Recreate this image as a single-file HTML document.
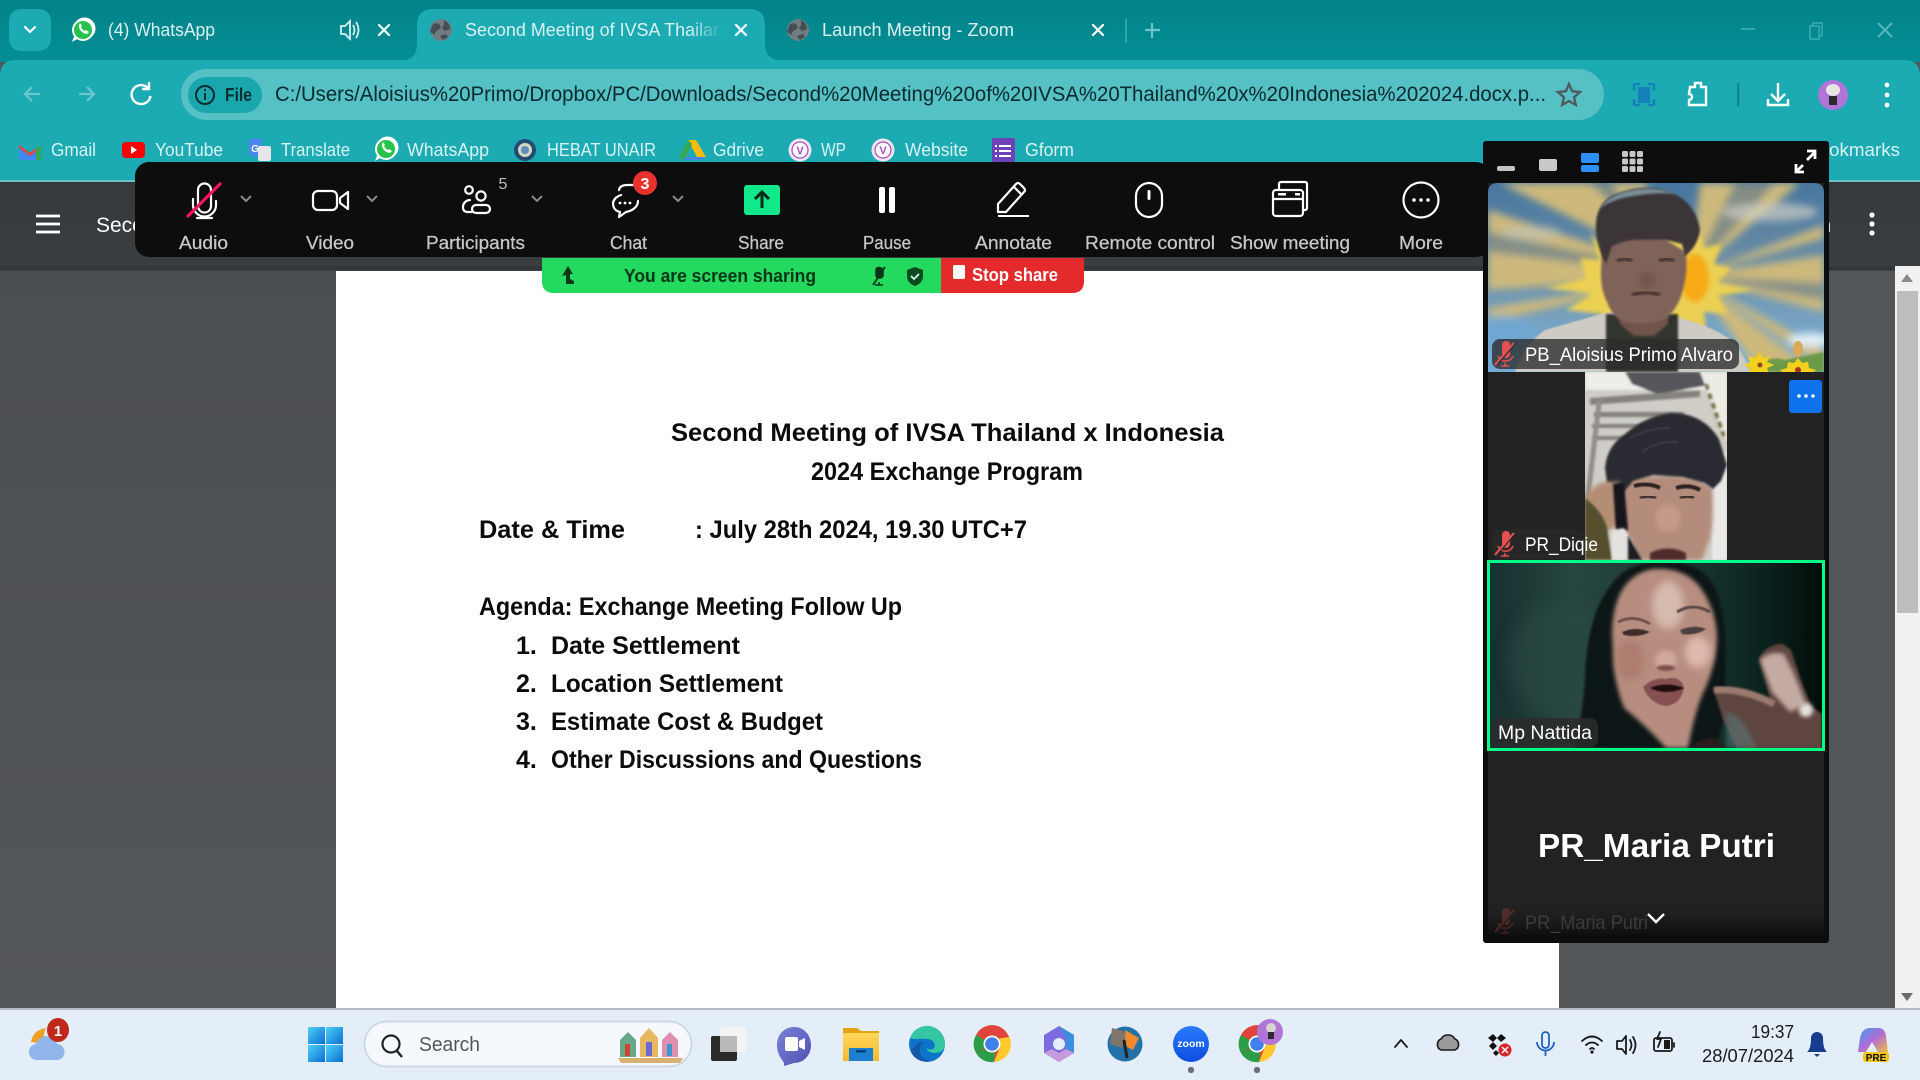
<!DOCTYPE html>
<html lang="en"><head><meta charset="utf-8"><title>Second Meeting</title>
<style>
html,body{margin:0;padding:0;width:1920px;height:1080px;overflow:hidden;background:#525659}
svg{display:block}
text{font-family:"Liberation Sans",sans-serif;white-space:pre}
.tab{font-size:18px;fill:#d8f1f2}
.bm{font-size:18px;fill:#d9f2f3}
.zl{font-size:18px;fill:#c8c8c8;text-anchor:start;font-weight:400;stroke:#c8c8c8;stroke-width:.25}
.doc{font-weight:700;fill:#0b0b0b;font-size:25px}
.lab{font-size:19px;fill:#fff}
.ic{fill:none;stroke:#fff;stroke-width:2.2;stroke-linecap:round;stroke-linejoin:round}
.tr{fill:none;stroke:#1a1a1a;stroke-width:1.8;stroke-linecap:round;stroke-linejoin:round}
</style></head><body>
<svg width="1920" height="1080" viewBox="0 0 1920 1080" xmlns="http://www.w3.org/2000/svg">
<defs>
<linearGradient id="tabs" x1="0" y1="0" x2="0" y2="1"><stop offset="0" stop-color="#028289"/><stop offset="1" stop-color="#048f95"/></linearGradient>
<linearGradient id="head" x1="0" y1="0" x2="0" y2="1"><stop offset="0" stop-color="#36393c"/><stop offset="1" stop-color="#3b3e41"/></linearGradient>
<linearGradient id="side" x1="0" y1="0" x2="0" y2="1"><stop offset="0" stop-color="#4c4f52"/><stop offset="1" stop-color="#54575a"/></linearGradient>
<linearGradient id="fade" x1="0" y1="0" x2="1" y2="0"><stop offset="0" stop-color="#1cabb2" stop-opacity="0"/><stop offset="1" stop-color="#1cabb2"/></linearGradient>
<linearGradient id="pf" x1="0" y1="0" x2="0" y2="1"><stop offset="0" stop-color="#222" stop-opacity="0"/><stop offset="1" stop-color="#0e0e0e"/></linearGradient>
<linearGradient id="v3" x1="0" y1="0" x2="1" y2="0"><stop offset="0" stop-color="#16302f"/><stop offset=".25" stop-color="#27463f"/><stop offset=".55" stop-color="#1b3a35"/><stop offset=".8" stop-color="#0c2521"/><stop offset="1" stop-color="#020d0a"/></linearGradient>
<linearGradient id="skyg" x1="0" y1="0" x2="0" y2="1"><stop offset="0" stop-color="#47759f"/><stop offset=".45" stop-color="#6d8fa6"/><stop offset="1" stop-color="#7fb4da"/></linearGradient>
<linearGradient id="win1" x1="0" y1="0" x2="1" y2="1"><stop offset="0" stop-color="#4fd0f8"/><stop offset="1" stop-color="#0a6fd0"/></linearGradient>
<linearGradient id="zm" x1="0" y1="0" x2="0" y2="1"><stop offset="0" stop-color="#2a7bff"/><stop offset="1" stop-color="#0b4de0"/></linearGradient>
<linearGradient id="folder" x1="0" y1="0" x2="0" y2="1"><stop offset="0" stop-color="#ffd75c"/><stop offset="1" stop-color="#f6b92c"/></linearGradient>
<linearGradient id="meet" x1="0" y1="0" x2="1" y2="1"><stop offset="0" stop-color="#7b83d8"/><stop offset="1" stop-color="#4f4fb0"/></linearGradient>
<linearGradient id="cp" x1="0" y1="0" x2="1" y2="1"><stop offset="0" stop-color="#3aa4ee"/><stop offset=".5" stop-color="#b06ad8"/><stop offset="1" stop-color="#f0c040"/></linearGradient>
<filter id="b05" x="-30%" y="-30%" width="160%" height="160%"><feGaussianBlur stdDeviation=".6"/></filter>
<filter id="b1" x="-30%" y="-30%" width="160%" height="160%"><feGaussianBlur stdDeviation="1"/></filter>
<filter id="b2" x="-30%" y="-30%" width="160%" height="160%"><feGaussianBlur stdDeviation="2"/></filter>
<filter id="b4" x="-50%" y="-50%" width="200%" height="200%"><feGaussianBlur stdDeviation="4"/></filter>
<filter id="b8" x="-80%" y="-80%" width="260%" height="260%"><feGaussianBlur stdDeviation="8"/></filter>
<clipPath id="c1"><path d="M1488 372V193q0-10 10-10h316q10 0 10 10v179z"/></clipPath>
<clipPath id="c2"><rect x="1585" y="372" width="142" height="188"/></clipPath>
<clipPath id="c3"><rect x="1490" y="563" width="332" height="185"/></clipPath>
<clipPath id="tc2"><rect x="417" y="0" width="305" height="60"/></clipPath>
<g id="wa"><circle cx="0" cy="0" r="11" fill="#fff"/><path d="M-11 12l3-8a11 11 0 1 1 4 4z" fill="#fff"/><circle cx="0" cy="0" r="9" fill="#27c24c"/><path d="M-4-5c-1 4 4 9 8 9l2-2-3-2-1 1c-2-1-3-2-4-4l1-1-2-3z" fill="#fff"/></g>
<g id="globe"><circle r="11" fill="#6f7d82"/><path d="M-8-6q5-2 7 1t-2 5-3 5l-5-3zM3-10q6 3 6 9l-5 2-3-3 2-3zM-1 6l6-2 2 3-5 3z" fill="#444e53"/></g>
<g id="vt"><circle r="11.5" fill="#f1e4f1"/><circle r="8" fill="#fff" stroke="#a24fc0" stroke-width="1.2"/><text x="0" y="4" font-size="11" fill="#a24fc0" text-anchor="middle" font-weight="700">V</text></g>
<g id="mm"><path d="M-3-9a4 4 0 0 1 8 0v9a4 4 0 0 1-8 0z" fill="#e45050"/><path d="M-7 2a8 8 0 0 0 15 0M0 9v3M-4 12h8" fill="none" stroke="#e45050" stroke-width="1.6"/><path d="M-10 11L9-11" stroke="#e45050" stroke-width="2.2"/><path d="M-8 11L11-11" stroke="#2b2b2b" stroke-width="1.2"/></g>
<g id="chrome"><circle r="18" fill="#e8443a"/><path d="M0 0L-16 9A18 18 0 0 1-16-9z" fill="#2a9d46"/><path d="M-16 9A18 18 0 0 0 2 18L4 0z" fill="#2a9d46"/><path d="M3-8H17A18 18 0 0 1 2 18L8 3z" fill="#fdc92f"/><path d="M-16-9A18 18 0 0 1 17-7L4-5z" fill="#e0443a"/><circle r="8.5" fill="#fff"/><circle r="6.8" fill="#3f80ea"/></g>
</defs>

<!-- page background -->
<rect width="1920" height="1080" fill="#525659"/>
<rect x="0" y="270" width="336" height="738" fill="url(#side)"/>
<rect x="0" y="0" width="1920" height="62" fill="url(#tabs)"/>
<path d="M0 182V76q0-16 16-16h1888q16 0 16 16v106z" fill="#1cabb2"/>

<!-- active tab -->
<path d="M405 60q12-2 12-16V25q0-16 16-16h316q16 0 16 16v19q0 14 13 16z" fill="#1cabb2"/>
<rect x="9" y="9" width="42" height="42" rx="12" fill="#1cabb2"/>
<path d="M25 27l5 5 5-5" class="ic" stroke-width="2.6"/>
<use href="#wa" x="83" y="30"/>
<text class="tab" x="108" y="36" textLength="107" lengthAdjust="spacingAndGlyphs">(4) WhatsApp</text>
<path d="M341 26h4l5-5v18l-5-5h-4zM353 25q3 5 0 10M356 22q5 8 0 16" fill="none" stroke="#d8f1f2" stroke-width="1.8"/>
<path d="M379 25l10 10M389 25l-10 10" class="ic" stroke-width="2.6"/>
<use href="#globe" x="441" y="30"/>
<g clip-path="url(#tc2)"><text class="tab" x="465" y="36" textLength="268" lengthAdjust="spacingAndGlyphs">Second Meeting of IVSA Thailand</text></g>
<rect x="690" y="15" width="32" height="30" fill="url(#fade)"/>
<path d="M736 25l10 10M746 25l-10 10" class="ic" stroke-width="2.6"/>
<use href="#globe" x="798" y="30"/>
<text class="tab" x="822" y="36" textLength="192" lengthAdjust="spacingAndGlyphs">Launch Meeting - Zoom</text>
<path d="M1093 25l10 10M1103 25l-10 10" class="ic" stroke-width="2.6"/>
<rect x="1125" y="19" width="2" height="24" fill="#2ba8ae"/>
<path d="M1152 23v15M1145 30h15" fill="none" stroke="#6bc5c9" stroke-width="2.2"/>
<path d="M1741 29h14" stroke="#33a7ac" stroke-width="2"/>
<path d="M1810 26h9v13h-9zM1813 26v-3h9v13h-3" fill="none" stroke="#33a7ac" stroke-width="1.8"/>
<path d="M1878 23l14 14M1892 23l-14 14" stroke="#54b5ba" stroke-width="2"/>

<!-- toolbar -->
<path d="M40 94H26M32 87l-7 7 7 7" fill="none" stroke="#6cc6cb" stroke-width="2.2"/>
<path d="M79 94h14M87 87l7 7-7 7" fill="none" stroke="#6cc6cb" stroke-width="2.2"/>
<path d="M148 88a9.5 9.5 0 1 0 2.5 8M149 82v7h-7" fill="none" stroke="#fff" stroke-width="2.4"/>
<rect x="181" y="69" width="1423" height="51" rx="25.5" fill="#55c1c5"/>
<rect x="188" y="77" width="74" height="36" rx="18" fill="#1aa6ad"/>
<circle cx="205" cy="95" r="9" fill="none" stroke="#0b2b2e" stroke-width="2"/>
<path d="M205 93v7M205 89v2" stroke="#0b2b2e" stroke-width="2"/>
<text x="225" y="101" font-size="18" font-weight="700" fill="#0d2e30" textLength="27" lengthAdjust="spacingAndGlyphs">File</text>
<text x="275" y="101" font-size="21" fill="#0c2a2d" textLength="1271" lengthAdjust="spacingAndGlyphs">C:/Users/Aloisius%20Primo/Dropbox/PC/Downloads/Second%20Meeting%20of%20IVSA%20Thailand%20x%20Indonesia%202024.docx.p...</text>
<path d="M1569 84l3.2 7.2 7.8.8-5.9 5.2 1.7 7.8-6.8-4-6.8 4 1.7-7.8-5.9-5.2 7.8-.8z" fill="none" stroke="#4f5b5e" stroke-width="2.4"/>
<path d="M1634 90v-6h6M1648 84h6v6M1654 99v6h-6M1640 105h-6v-6" fill="none" stroke="#1481ba" stroke-width="2.2"/>
<rect x="1638" y="87" width="12" height="16" fill="#1481ba"/>
<path d="M1690 87h5v-4h6v4h5v18h-17v-5a3 3 0 0 0 0-6z" fill="none" stroke="#fff" stroke-width="2.4"/>
<rect x="1737" y="83" width="2.4" height="23" fill="#12838a"/>
<path d="M1778 83v18M1771 94l7 7 7-7M1768 99v6h20v-6" fill="none" stroke="#fff" stroke-width="2.4"/>
<ellipse cx="1833" cy="95" rx="15" ry="15" fill="#b174d8"/>
<ellipse cx="1833" cy="90" rx="7" ry="6" fill="#e8e4e0"/><rect x="1829" y="96" width="8" height="9" fill="#2a2a2a"/>
<g fill="#fff"><circle cx="1887" cy="85" r="2.4"/><circle cx="1887" cy="95" r="2.4"/><circle cx="1887" cy="105" r="2.4"/></g>

<!-- bookmarks -->
<path d="M19 160v-15l11 8 11-8v15" fill="#4285f4"/><path d="M19 145l11 8 11-8v3l-11 8-11-8z" fill="#ea4335"/><path d="M36 149l5-4v15h-5z" fill="#34a853"/>
<text class="bm" x="51" y="156" textLength="45" lengthAdjust="spacingAndGlyphs">Gmail</text>
<rect x="122" y="142" width="23" height="16" rx="4" fill="#f00"/><path d="M131 146l6 4-6 4z" fill="#fff"/>
<text class="bm" x="155" y="156" textLength="68" lengthAdjust="spacingAndGlyphs">YouTube</text>
<rect x="249" y="139" width="13" height="17" rx="2" fill="#4a87ee"/><rect x="258" y="146" width="13" height="15" rx="2" fill="#e4e6ea"/>
<text x="255" y="152" font-size="10" fill="#fff" text-anchor="middle" font-weight="700">G</text>
<text class="bm" x="281" y="156" textLength="69" lengthAdjust="spacingAndGlyphs">Translate</text>
<use href="#wa" x="386" y="149"/>
<text class="bm" x="407" y="156" textLength="82" lengthAdjust="spacingAndGlyphs">WhatsApp</text>
<circle cx="525" cy="150" r="11" fill="#234a72"/><circle cx="525" cy="150" r="7" fill="#cfd8c0"/><circle cx="525" cy="150" r="4" fill="#5e8bb8"/>
<text class="bm" x="547" y="156" textLength="109" lengthAdjust="spacingAndGlyphs">HEBAT UNAIR</text>
<path d="M688 140h8l10 17h-9z" fill="#fbbc04"/><path d="M688 140l-9 17 5 3 8-16z" fill="#34a853"/><path d="M684 160h17l5-3h-20z" fill="#4285f4"/>
<text class="bm" x="713" y="156" textLength="51" lengthAdjust="spacingAndGlyphs">Gdrive</text>
<use href="#vt" x="800" y="150"/>
<text class="bm" x="821" y="156" textLength="25" lengthAdjust="spacingAndGlyphs">WP</text>
<use href="#vt" x="883" y="150"/>
<text class="bm" x="905" y="156" textLength="63" lengthAdjust="spacingAndGlyphs">Website</text>
<rect x="992" y="138" width="23" height="24" rx="2" fill="#6f41b8"/><path d="M999 146h12M999 151h12M999 156h12" stroke="#fff" stroke-width="2"/><path d="M995 146h2M995 151h2M995 156h2" stroke="#fff" stroke-width="2"/>
<text class="bm" x="1025" y="156" textLength="49" lengthAdjust="spacingAndGlyphs">Gform</text>
<text class="bm" x="1829" y="156" textLength="71" lengthAdjust="spacingAndGlyphs">okmarks</text>

<!-- dark pdf header -->
<rect x="0" y="180" width="1920" height="2.5" fill="#68c3c7"/>
<rect x="0" y="182" width="1920" height="88" fill="url(#head)"/>
<rect x="0" y="266" width="1920" height="5" fill="#2d3032" opacity=".5"/>
<path d="M36 216h24M36 224h24M36 232h24" stroke="#fff" stroke-width="2.8"/>
<text x="96" y="232" font-size="21" fill="#fff">Second</text>
<text x="1820" y="232" font-size="20" fill="#fff">n</text>
<g fill="#fff"><circle cx="1872" cy="215" r="2.6"/><circle cx="1872" cy="224" r="2.6"/><circle cx="1872" cy="233" r="2.6"/></g>

<!-- scrollbar -->
<rect x="1895" y="266" width="25" height="742" fill="#f1f1f1"/>
<path d="M1907 274l6 8h-12z" fill="#8a8a8a"/>
<rect x="1897" y="291" width="21" height="322" fill="#bdbdbd"/>
<path d="M1907 1001l6-8h-12z" fill="#6a6a6a"/>

<!-- page -->
<rect x="336" y="271" width="1223" height="737" fill="#fff"/>
<text class="doc" x="671" y="441" textLength="553" lengthAdjust="spacingAndGlyphs">Second Meeting of IVSA Thailand x Indonesia</text>
<text class="doc" x="811" y="480" textLength="272" lengthAdjust="spacingAndGlyphs">2024 Exchange Program</text>
<text class="doc" x="479" y="538" textLength="146" lengthAdjust="spacingAndGlyphs">Date &amp; Time</text>
<text class="doc" x="695" y="538" textLength="332" lengthAdjust="spacingAndGlyphs">: July 28th 2024, 19.30 UTC+7</text>
<text class="doc" x="479" y="615" textLength="423" lengthAdjust="spacingAndGlyphs">Agenda: Exchange Meeting Follow Up</text>
<text class="doc" x="516" y="654">1.</text><text class="doc" x="551" y="654" textLength="189" lengthAdjust="spacingAndGlyphs">Date Settlement</text>
<text class="doc" x="516" y="692">2.</text><text class="doc" x="551" y="692" textLength="232" lengthAdjust="spacingAndGlyphs">Location Settlement</text>
<text class="doc" x="516" y="730">3.</text><text class="doc" x="551" y="730" textLength="272" lengthAdjust="spacingAndGlyphs">Estimate Cost &amp; Budget</text>
<text class="doc" x="516" y="768">4.</text><text class="doc" x="551" y="768" textLength="371" lengthAdjust="spacingAndGlyphs">Other Discussions and Questions</text>

<!-- zoom toolbar -->
<rect x="135" y="162" width="1355" height="95" rx="14" fill="#0d0d0d"/>
<text class="zl" x="179" y="249" textLength="49" lengthAdjust="spacingAndGlyphs">Audio</text>
<text class="zl" x="306" y="249" textLength="48" lengthAdjust="spacingAndGlyphs">Video</text>
<text class="zl" x="426" y="249" textLength="99" lengthAdjust="spacingAndGlyphs">Participants</text>
<text class="zl" x="610" y="249" textLength="37" lengthAdjust="spacingAndGlyphs">Chat</text>
<text class="zl" x="738" y="249" textLength="46" lengthAdjust="spacingAndGlyphs">Share</text>
<text class="zl" x="863" y="249" textLength="48" lengthAdjust="spacingAndGlyphs">Pause</text>
<text class="zl" x="975" y="249" textLength="77" lengthAdjust="spacingAndGlyphs">Annotate</text>
<text class="zl" x="1085" y="249" textLength="130" lengthAdjust="spacingAndGlyphs">Remote control</text>
<text class="zl" x="1230" y="249" textLength="120" lengthAdjust="spacingAndGlyphs">Show meeting</text>
<text class="zl" x="1399" y="249" textLength="44" lengthAdjust="spacingAndGlyphs">More</text>
<!-- audio -->
<path d="M198 190a6.500 6.500 0 0 1 13 0v16a6.500 6.500 0 0 1-13 0zM193 199v6a11.500 11.500 0 0 0 23 0v-4M204.500 217v1M197 218h15" class="ic" stroke-width="1.8"/>
<path d="M188 216l32-32" stroke="#f5155f" stroke-width="3.2" stroke-linecap="round"/>
<!-- video -->
<rect x="313" y="191" width="24" height="19" rx="5" class="ic" stroke-width="1.8"/><path d="M340 198l8-6v17l-8-6z" class="ic" stroke-width="1.8"/>
<!-- participants -->
<circle cx="469" cy="190" r="3.800" class="ic" stroke-width="1.800"/><circle cx="481" cy="196" r="4.600" class="ic" stroke-width="1.800"/>
<path d="M472 212h-5a4 4 0 0 1-4-4v-1a7 7 0 0 1 7-7" class="ic" stroke-width="1.800"/><rect x="472" y="205" width="18" height="8" rx="4" class="ic" stroke-width="1.800"/>
<text x="503" y="189" font-size="16" fill="#c0c0c0" text-anchor="middle">5</text>
<!-- chat -->
<path d="M619 190q1-5 8-5h8M621 195a12 10 0 0 0-8 8c0 4 2 8 7 9l-1 5 7-5c6-1 12-5 12-11" class="ic" stroke-width="1.800"/>
<g fill="#fff"><circle cx="620" cy="203" r="1.400"/><circle cx="625" cy="203" r="1.400"/><circle cx="630" cy="203" r="1.400"/></g>
<circle cx="645" cy="183" r="12" fill="#e8302c"/><text x="645" y="189" font-size="16" fill="#fff" text-anchor="middle" font-weight="700">3</text>
<!-- chevrons -->
<path d="M241 196l5 5 5-5M367 196l5 5 5-5M532 196l5 5 5-5M673 196l5 5 5-5" fill="none" stroke="#8a8a8a" stroke-width="2"/>
<!-- share -->
<rect x="744" y="185" width="36" height="30" rx="3" fill="#10e88a"/>
<path d="M762 208v-15M755 199l7-7 7 7" fill="none" stroke="#0a2a1a" stroke-width="3"/>
<!-- pause -->
<rect x="879" y="187" width="6" height="26" rx="2" fill="#fff"/><rect x="889" y="187" width="6" height="26" rx="2" fill="#fff"/>
<!-- annotate -->
<path d="M998 204l18-20q2-2 4 0l4 4q2 2 0 4l-18 20h-8zM1014 187l7 7" class="ic" stroke-width="1.800"/><path d="M998 216h31" stroke="#fff" stroke-width="2"/>
<!-- remote -->
<rect x="1136" y="183" width="26" height="34" rx="13" class="ic" stroke-width="1.800"/><rect x="1147.500" y="190" width="3" height="10" rx="1.500" fill="#fff"/>
<!-- show meeting -->
<rect x="1273" y="190" width="30" height="26" rx="3" class="ic" stroke-width="1.800"/><path d="M1279 190v-6a2 2 0 0 1 2-2h24a2 2 0 0 1 2 2v24a2 2 0 0 1-2 2h-2M1274 199h28" class="ic" stroke-width="1.800"/>
<rect x="1278" y="193" width="8" height="2.500" fill="#fff"/><rect x="1295" y="193" width="5" height="2.500" fill="#fff"/>
<!-- more -->
<circle cx="1421" cy="200" r="17.500" class="ic" stroke-width="1.800"/><g fill="#fff"><circle cx="1414" cy="200" r="1.800"/><circle cx="1421" cy="200" r="1.800"/><circle cx="1428" cy="200" r="1.800"/></g>

<!-- sharing bar -->
<path d="M542 258h399v35H554q-12 0-12-12z" fill="#23d95e"/>
<path d="M941 258h143v23q0 12-12 12H941z" fill="#e42a2a"/>
<path d="M566 284v-9l-4 1 6-10 5 8h-3l0 5 4 2v3z" fill="#0a3a1a"/>
<text x="624" y="282" font-size="18" font-weight="700" fill="#0b3518" textLength="192" lengthAdjust="spacingAndGlyphs">You are screen sharing</text>
<path d="M876 269a4 4 0 0 1 7 2v5a4 4 0 0 1-7 0zM879 282v3M875 285h8" fill="#0b3518" stroke="#0b3518" stroke-width="1.500"/><path d="M873 285l12-18" stroke="#0b3518" stroke-width="1.800"/>
<path d="M915 267l8 3v6q0 7-8 10-8-3-8-10v-6z" fill="#0d4a20"/><path d="M911 276l3 3 5-5" fill="none" stroke="#cfe" stroke-width="1.800"/>
<rect x="953" y="265" width="12" height="14" rx="1.500" fill="#fff"/>
<text x="972" y="281" font-size="18" font-weight="700" fill="#fff" textLength="86" lengthAdjust="spacingAndGlyphs">Stop share</text>

<!-- participants panel -->
<rect x="1483" y="141" width="346" height="802" rx="3" fill="#0d0d0d"/>
<rect x="1488" y="183" width="336" height="752" fill="#222"/>
<rect x="1497" y="166" width="18" height="5" rx="2" fill="#c4c4c4"/>
<rect x="1539" y="159" width="18" height="12" rx="2" fill="#c9c9c9"/>
<rect x="1581" y="153" width="18" height="10" rx="2" fill="#2f8ffa"/><rect x="1581" y="165" width="18" height="7" rx="2" fill="#2f8ffa"/>
<g fill="#c8c8c8"><rect x="1622" y="151" width="6" height="6" rx="1.500"/><rect x="1629.500" y="151" width="6" height="6" rx="1.500"/><rect x="1637" y="151" width="6" height="6" rx="1.500"/><rect x="1622" y="158.500" width="6" height="6" rx="1.500"/><rect x="1629.500" y="158.500" width="6" height="6" rx="1.500"/><rect x="1637" y="158.500" width="6" height="6" rx="1.500"/><rect x="1622" y="166" width="6" height="6" rx="1.500"/><rect x="1629.500" y="166" width="6" height="6" rx="1.500"/><rect x="1637" y="166" width="6" height="6" rx="1.500"/></g>
<path d="M1796 172l7-7M1796 164v8h8M1815 152l-8 8M1807 151h8v8" fill="none" stroke="#fff" stroke-width="2.800"/>

<!-- video 1 -->
<g clip-path="url(#c1)">
<rect x="1488" y="183" width="336" height="189" fill="url(#skyg)"/>
<g filter="url(#b4)">
<path d="M1690 276L1488 252V290zM1690 276L1488 210V232zM1690 276L1500 183H1590zM1690 276L1610 183H1645zM1690 276L1700 183H1735zM1690 276L1824 255V283zM1690 276L1775 183H1800zM1690 276L1824 225V238zM1690 276L1824 300V312zM1690 276L1824 350V368zM1690 276L1760 372H1815zM1690 276L1488 308V322z" fill="#cdb97c"/>
<path d="M1690 276L1488 232V252zM1690 276L1590 183H1610zM1690 276L1735 183H1775zM1690 276L1824 283V300z" fill="#8b9181" opacity=".85"/>
<ellipse cx="1770" cy="212" rx="48" ry="9" fill="#cfcfc2" opacity=".7"/>
<ellipse cx="1530" cy="233" rx="30" ry="7" fill="#c0c2b0" opacity=".7"/>
<ellipse cx="1810" cy="340" rx="22" ry="7" fill="#dfeef5"/>
<ellipse cx="1500" cy="345" rx="40" ry="30" fill="#6ea8d4" opacity=".8"/>
</g>
<path d="M1590 232l12 14 82-6 14-14 6 22 18-4-8 20 18 4-14 14 36 8-36 6 10 18-24-2 2 20-18-10-4 12-70 0-20 2 8-22-36-4 26-16-46-6 40-10-6-20 20 2z" fill="#ecd052" filter="url(#b2)"/>
<ellipse cx="1695" cy="278" rx="14" ry="24" fill="#f6ab14" filter="url(#b2)"/>
<path d="M1515 372q8-26 30-42l56-16 10-2 70 6 18 6q24 8 36 20 10 12 15 28z" fill="#cdcbc3" filter="url(#b05)"/>
<path d="M1606 372v-58h72v58z" fill="#33362f" filter="url(#b1)"/>
<path d="M1620 300h48v24l-14 12h-20l-14-12z" fill="#6f524a" filter="url(#b1)"/>
<path d="M1601 268q-1 20 6 34 6 16 18 20 20 4 38-2 14-8 20-30 5-18 3-38l-30-18h-36l-18 16z" fill="#806359" filter="url(#b1)"/>
<path d="M1596 232q-2-26 16-36 30-14 58-4 26 10 30 38-2 16-15 26l-3-12q-18-6-34-4-20-2-36 6l-6 18q-8-14-10-32z" fill="#3a3638" filter="url(#b1)"/>
<path d="M1600 208q10-14 32-18 24-4 44 4-22-2-42 2-18 2-34 12z" fill="#7f979f" filter="url(#b1)" opacity=".9"/>
<path d="M1617 261q8-4 15 0M1659 261q8-4 15 0" stroke="#413230" stroke-width="3.500" fill="none" filter="url(#b1)"/>
<path d="M1632 295q14-5 28 0" stroke="#47302e" stroke-width="3.500" fill="none" filter="url(#b1)"/>
<ellipse cx="1647" cy="280" rx="9" ry="8" fill="#75564c" filter="url(#b2)"/>
<path d="M1752 372l10-10q14-6 22-2l40-8v20z" fill="#6d9a48" filter="url(#b1)"/>
<path d="M1760 352l3 6 7-2-3 6 7 3-7 3 2 6-7-2-4 6-3-6-7 2 2-6-6-3 6-3-2-6 7 2z" fill="#f4d01e"/><path d="M1798 358l4 5 6-1 1 6 7 2-5 4v6h-26v-6l-5-4 7-2 1-6 6 1z" fill="#f4d01e"/><circle cx="1798" cy="370" r="3" fill="#a8321e"/><circle cx="1760" cy="365" r="2.500" fill="#8a4a1e"/>
<ellipse cx="1798" cy="349" rx="5" ry="8" fill="#d9a95a"/>
</g>
<rect x="1492" y="339" width="247" height="30" rx="8" fill="#2b2b2b" fill-opacity=".78"/>
<use href="#mm" x="1505" y="354"/>
<text class="lab" x="1525" y="361" textLength="208" lengthAdjust="spacingAndGlyphs">PB_Aloisius Primo Alvaro</text>

<!-- video 2 -->
<g clip-path="url(#c2)">
<rect x="1585" y="372" width="142" height="188" fill="#cfcdc6"/>
<g filter="url(#b1)">
<rect x="1585" y="372" width="142" height="18" fill="#eeede9"/>
<path d="M1625 372h85l-6 14-46 8-26-10z" fill="#55565c"/>
<path d="M1590 398l110-8v7l-110 8zM1594 412h90v5h-90zM1592 424h78v4h-78zM1592 436h60v4h-60z" fill="#84827c"/>
<path d="M1597 400l-12 100h5l12-100z" fill="#8f8d88"/>
<path d="M1700 372l27 70v-70z" fill="#ecebe4"/><path d="M1706 384l18 52" stroke="#77703e" stroke-width="4" stroke-dasharray="6 4"/>
<rect x="1712" y="452" width="15" height="108" fill="#e9e8e6"/>
</g>
<path d="M1622 492q2-16 40-16 36 0 50 12 2 30-2 50l-8 22h-76q-8-36-4-68z" fill="#b48c7c" filter="url(#b2)"/>
<path d="M1605 468q2-22 20-34 20-18 46-21 32 0 48 26l8 26-6 16-8 8-8-6-22-6-30-2-20 6-10 12-6-8-10-2z" fill="#2c2c31" filter="url(#b1)"/>
<path d="M1630 438q18-10 40-10M1642 452q16-12 36-10" stroke="#3b3b42" stroke-width="2" fill="none" filter="url(#b05)"/>
<path d="M1585 496q10-12 20-14l16 0 5 24-8 20-18 8h-15z" fill="#b48d74" filter="url(#b2)"/>
<path d="M1585 498q18 14 22 30l5 32h-27z" fill="#55502e" filter="url(#b1)"/>
<path d="M1613 484l11-2 4 48-12 2z" fill="#17171b" filter="url(#b1)"/>
<path d="M1612 530l12-2 8 12 8 20h-28z" fill="#e4e2de" filter="url(#b1)"/>
<path d="M1628 535l14 25h-14z" fill="#1f1f22" filter="url(#b1)"/>
<path d="M1634 486q14-4 26 2M1676 488q14-4 24 2" stroke="#2b2320" stroke-width="4" fill="none" filter="url(#b05)"/>
<path d="M1640 498q8-3 16 0M1680 498q8-3 14 0" stroke="#3a2c28" stroke-width="3" fill="none" filter="url(#b05)"/>
<ellipse cx="1668" cy="518" rx="13" ry="14" fill="#c49a8a" filter="url(#b2)"/>
<path d="M1650 553q18-9 36 0l0 7h-36z" fill="#4f2c2b" filter="url(#b1)"/>
</g>
<rect x="1492" y="529" width="93" height="30" rx="8" fill="#2b2b2b" fill-opacity=".55"/>
<use href="#mm" x="1505" y="544"/>
<text class="lab" x="1525" y="551" textLength="73" lengthAdjust="spacingAndGlyphs">PR_Diqie</text>
<rect x="1789" y="380" width="33" height="33" rx="3" fill="#0e72ed"/>
<g fill="#fff"><circle cx="1799" cy="396" r="1.800"/><circle cx="1806" cy="396" r="1.800"/><circle cx="1813" cy="396" r="1.800"/></g>

<!-- video 3 -->
<g clip-path="url(#c3)">
<rect x="1490" y="563" width="332" height="185" fill="url(#v3)"/>
<ellipse cx="1560" cy="660" rx="50" ry="60" fill="#2b4a45" filter="url(#b8)" opacity=".6"/>
<path d="M1575 748q8-34 10-70 2-60 24-90 14-22 40-25h30q30 4 40 35 8 30 6 70 2 50-10 80z" fill="#101316" filter="url(#b1)"/>
<path d="M1612 635q0-30 12-48 12-16 30-18 30-2 46 18 16 22 17 50-1 30-14 56-8 18-15 55h-22q-22-24-42-40-8-20-10-40z" fill="#b68d7f" filter="url(#b2)"/>
<ellipse cx="1668" cy="605" rx="16" ry="24" fill="#dcc2b5" filter="url(#b4)" opacity=".85"/>
<ellipse cx="1698" cy="652" rx="13" ry="16" fill="#dfb9ad" filter="url(#b4)"/>
<ellipse cx="1630" cy="660" rx="14" ry="20" fill="#ad7d6e" filter="url(#b4)"/>
<path d="M1618 622q16-8 32 2" stroke="#6a4c44" stroke-width="2.500" fill="none" filter="url(#b05)"/>
<path d="M1677 612q16-10 33 0" stroke="#5a4a48" stroke-width="3" fill="none" filter="url(#b05)"/>
<path d="M1622 632q14-6 28 0q-12 6-26 3z" fill="#3f2c2c" filter="url(#b05)"/>
<path d="M1680 630q14-6 26-1q-10 7-24 5z" fill="#4b4040" filter="url(#b05)"/>
<ellipse cx="1666" cy="660" rx="11" ry="10" fill="#d0a99c" filter="url(#b2)"/>
<ellipse cx="1666" cy="668" rx="9" ry="3" fill="#7a5048" filter="url(#b1)"/>
<path d="M1643 687q10-10 22-8 16-4 19 9-3 16-18 18-16-2-23-19z" fill="#855052" filter="url(#b05)"/>
<path d="M1650 688q16-7 34 0-18 8-34 0z" fill="#220a0e" filter="url(#b05)"/>
<path d="M1713 688q30-2 58 14l-10-36 -2-8q8-14 24-14l8 6 10 30 10 26 11 8v35h-85l-14-30z" fill="#5f453f" filter="url(#b1)"/>
<path d="M1760 660q10-10 24-6l10 20 12 30-16 8-18-20z" fill="#c3aaa2" filter="url(#b2)"/>
<path d="M1714 690q30-2 60 14" stroke="#9b7a70" stroke-width="7" fill="none" filter="url(#b1)"/>
<circle cx="1806" cy="710" r="7" fill="#e5e3dc" filter="url(#b2)"/>
<path d="M1726 712q18 2 30 36h-30z" fill="#577b7a" opacity=".55" filter="url(#b2)"/>
<path d="M1690 748q2-6 20-10 10 0 14 10z" fill="#2a1e1a" filter="url(#b1)"/>
</g>
<rect x="1488.500" y="561.500" width="335" height="188" fill="none" stroke="#00ff87" stroke-width="3"/>
<rect x="1492" y="718" width="106" height="29" rx="8" fill="#2b2b2b" fill-opacity=".88"/>
<text class="lab" x="1498" y="739" textLength="94" lengthAdjust="spacingAndGlyphs">Mp Nattida</text>

<!-- video 4 -->
<text x="1538" y="857" font-size="33" font-weight="700" fill="#fff" textLength="237" lengthAdjust="spacingAndGlyphs">PR_Maria Putri</text>
<rect x="1488" y="900" width="336" height="35" fill="url(#pf)"/>
<use href="#mm" x="1505" y="921" opacity=".25"/>
<text class="lab" x="1525" y="929" textLength="123" lengthAdjust="spacingAndGlyphs" style="fill:#3c3c3c">PR_Maria Putri</text>
<path d="M1648 914l8 8 8-8" fill="none" stroke="#fff" stroke-width="2.400"/>

<!-- taskbar -->
<rect x="0" y="1008" width="1920" height="2.500" fill="#b7bcc0"/>
<rect x="0" y="1010" width="1920" height="70" fill="#e4eef8"/>
<!-- weather -->
<path d="M46 1028q-13 2-15 14l14 2q-3-8 1-16z" fill="#f0a020"/>
<path d="M38 1060a8 8 0 0 1-2-16 11 11 0 0 1 21 0 8 8 0 0 1-1 16z" fill="#8fb5ea"/>
<ellipse cx="58" cy="1030" rx="11" ry="12" fill="#c0281c"/><text x="58" y="1036" font-size="15" font-weight="700" fill="#fff" text-anchor="middle">1</text>
<!-- start -->
<rect x="308" y="1027" width="17" height="17" fill="url(#win1)"/><rect x="326" y="1027" width="17" height="17" fill="url(#win1)"/><rect x="308" y="1045" width="17" height="17" fill="url(#win1)"/><rect x="326" y="1045" width="17" height="17" fill="url(#win1)"/>
<!-- search -->
<rect x="364.500" y="1021.500" width="327" height="45" rx="22.500" fill="#f5f9fd" stroke="#cfd9e4" stroke-width="2"/>
<circle cx="391" cy="1044" r="8.500" fill="none" stroke="#222" stroke-width="2.200"/><path d="M397 1051l5 6" stroke="#222" stroke-width="2.400"/>
<text x="419" y="1051" font-size="20" fill="#555" textLength="61" lengthAdjust="spacingAndGlyphs">Search</text>
<g><path d="M618 1058h65l-3 5h-59z" fill="#d8b070"/><path d="M620 1040l8-8 8 8v17h-16z" fill="#67a98a"/><path d="M640 1038l9-10 9 10v19h-18z" fill="#e6b960"/><path d="M662 1040l8-8 8 8v17h-16z" fill="#e08fae"/><rect x="625" y="1044" width="5" height="12" fill="#c43"/><rect x="646" y="1042" width="6" height="14" fill="#6a6ad0"/><rect x="667" y="1044" width="5" height="12" fill="#3a9ad0"/></g>
<!-- task view -->
<rect x="711" y="1036" width="26" height="25" rx="2" fill="#2a2a2a"/><rect x="720" y="1027" width="26" height="25" rx="2" fill="#f3f3f3"/><rect x="720" y="1036" width="17" height="16" fill="#b9b9b9"/>
<!-- meet -->
<path d="M794 1027c10 0 17 8 17 18s-7 18-17 18l-10 3v-3c-2-4-7-8-7-18 0-10 7-18 17-18z" fill="url(#meet)"/>
<rect x="785" y="1037" width="13" height="14" rx="2" fill="#fff"/><path d="M799 1041l6-3v12l-6-3z" fill="#fff"/>
<!-- folder -->
<path d="M843 1028h14l4 3h18v30h-36z" fill="#e2a512"/><rect x="843" y="1033" width="36" height="28" rx="1" fill="url(#folder)"/>
<path d="M849 1048h24v13h-24z" fill="#1c80d0"/><rect x="856" y="1050" width="10" height="2.500" fill="#0d3f78"/>
<!-- edge -->
<circle cx="927" cy="1044" r="18" fill="#0c75c9"/>
<path d="M910 1038a18 18 0 0 1 35 6c0 7-6 9-10 9-5 0-8-2-8-5 2 2 5 2 7 0 2-3 0-9-7-9-8-1-13 1-17-1z" fill="#35c7a4"/>
<path d="M925 1042c-4 2-6 6-5 11 1 4 5 7 11 8-7 2-16-1-20-9 2-6 8-11 14-10z" fill="#1458a8"/>
<!-- chrome etc -->
<use href="#chrome" x="992" y="1044"/>
<path d="M1059 1026l15 9v18l-15 9-15-9v-18z" fill="#7a6ce0"/><path d="M1059 1026l15 9v18l-8-4v-12z" fill="#3a8fe0"/><path d="M1044 1053l15 9 15-9-8-4-7 4-7-4z" fill="#c79ae0"/><circle cx="1059" cy="1044" r="6" fill="#e4eef8"/>
<circle cx="1125" cy="1044" r="17.500" fill="#2272a8"/><path d="M1125 1030l14 8-6 12-8-4z" fill="#ef8a30"/><path d="M1112 1028l14 4-4 16-12-4z" fill="#80756a"/><path d="M1124 1040l3 18" stroke="#222" stroke-width="3"/>
<rect x="1173" y="1026" width="36" height="36" rx="18" fill="url(#zm)"/>
<text x="1191" y="1047" font-size="10.500" font-weight="700" fill="#fff" text-anchor="middle">zoom</text>
<use href="#chrome" x="1257" y="1044"/>
<ellipse cx="1270" cy="1032" rx="13" ry="13" fill="#b174d8"/><ellipse cx="1271" cy="1028" rx="5" ry="5" fill="#d8d4d0"/><rect x="1268" y="1032" width="6" height="7" fill="#2a2a2a"/>
<rect x="1188" y="1067" width="6" height="6" rx="2.500" fill="#6a6f75"/><rect x="1254" y="1067" width="6" height="6" rx="2.500" fill="#6a6f75"/>
<!-- tray -->
<path d="M1395 1047l6-7 6 7" class="tr" stroke-width="2"/>
<path d="M1441 1050a6 6 0 0 1 0-11 8 8 0 0 1 14 0 6 6 0 0 1 0 11z" fill="#9a9a9a" stroke="#1a1a1a" stroke-width="1.600"/>
<g fill="#111"><path d="M1488 1038l5-4 4 4-4 4zM1497 1038l4-4 5 4-5 4zM1489 1046l4-4 4 4-4 4zM1493 1053l3-3 3 3-3 3z"/></g>
<circle cx="1505" cy="1050" r="6.500" fill="#d8232a"/><path d="M1502 1047l6 6M1508 1047l-6 6" stroke="#fff" stroke-width="1.500"/>
<rect x="1542" y="1032" width="7" height="16" rx="3.500" fill="none" stroke="#2060c0" stroke-width="1.800"/><path d="M1537 1042a8 8 0 0 0 17 0M1545.500 1050v6" fill="none" stroke="#2060c0" stroke-width="1.800"/>
<path d="M1582 1041q10-9 20 0M1586 1045q6-5 12 0M1590 1049q2-2 4 0" class="tr"/><circle cx="1592" cy="1052" r="1.600" fill="#1a1a1a"/>
<path d="M1617 1041h5l4-5v18l-4-5h-5zM1630 1040q3 5 0 10M1633 1037q5 8 0 16" class="tr"/>
<rect x="1654" y="1038" width="18" height="13" rx="2" class="tr"/><path d="M1674 1043v4" class="tr"/><path d="M1660 1032l-3 7h4l-3 8" class="tr"/><rect x="1664" y="1040" width="6" height="9" fill="#1a1a1a"/>
<text x="1794" y="1038" font-size="18" fill="#1a1a1a" text-anchor="end" textLength="43" lengthAdjust="spacingAndGlyphs">19:37</text>
<text x="1794" y="1062" font-size="18" fill="#1a1a1a" text-anchor="end" textLength="92" lengthAdjust="spacingAndGlyphs">28/07/2024</text>
<path d="M1807 1052q4-3 4-14a6 6 0 0 1 12 0q0 11 4 14z" fill="#173d8e"/><path d="M1814 1054h6l-3 3z" fill="#173d8e"/>
<path d="M1860 1038q2-10 10-10h8q7 0 8 8l2 16h-10l-6-10-6 10h-8z" fill="url(#cp)"/>
<rect x="1863" y="1052" width="26" height="10" rx="3" fill="#f0c418"/><text x="1876" y="1061" font-size="10" font-weight="700" fill="#111" text-anchor="middle">PRE</text>
</svg>
</body></html>
